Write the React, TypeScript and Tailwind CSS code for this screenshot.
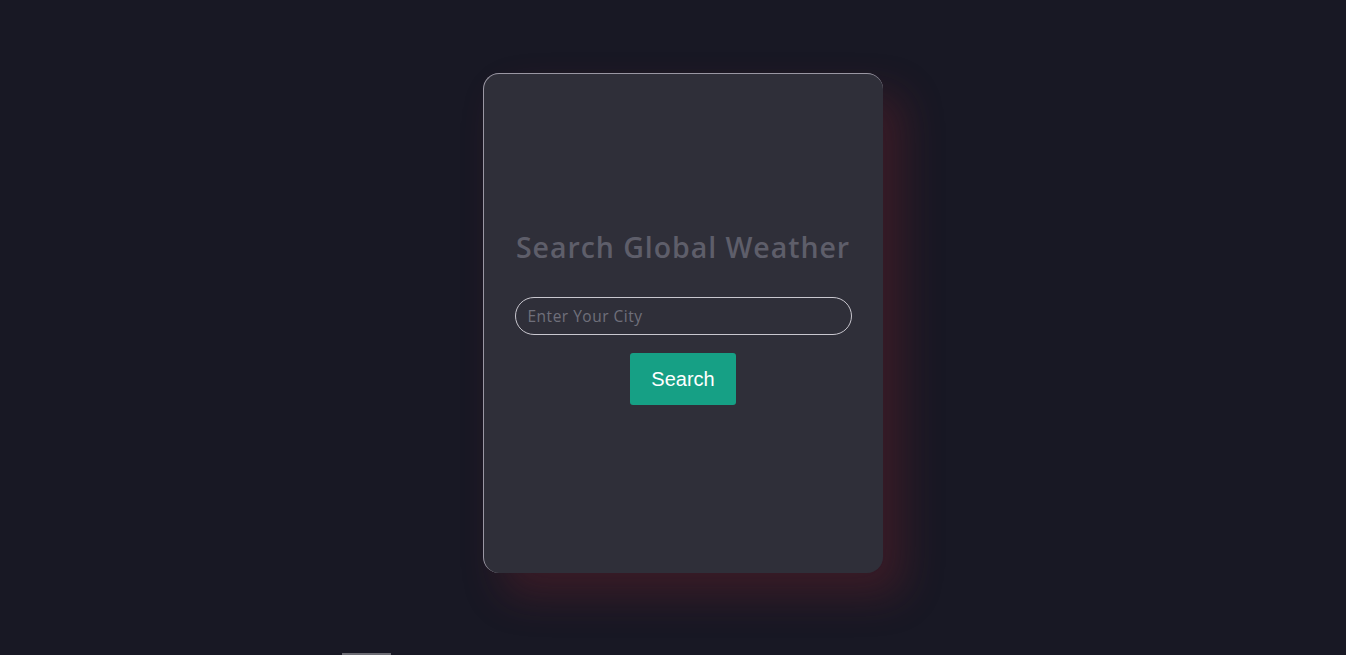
import React from "react";

export default function App() {
  return (
    <div className="min-h-screen bg-[#181824] overflow-hidden" style={{ fontFamily: "'Open Sans', 'Noto Sans', sans-serif" }}>
      <div className="h-[653px] flex justify-center pt-[73px]">
        <div className="w-[400px] h-[500px] bg-[#2f2f39] rounded-[16px] border-t border-l border-[#9a97a3] shadow-[20px_22px_40px_rgba(130,35,45,0.32)] flex flex-col items-center justify-center px-[31px] ml-[19px]">
          <h1 className="text-[28.5px] font-semibold text-[#5e5e6a] leading-none mt-[-9px] tracking-[0.95px]">
            Search Global Weather
          </h1>
          <input
            type="text"
            placeholder="Enter Your City"
            className="mt-[36px] w-full h-[38px] rounded-full border border-[#c9c7cf] bg-transparent px-[12px] text-[15.5px] tracking-[0.5px] text-[#c9c7cf] placeholder:text-[#6f6f7b] outline-none"
          />
          <button
            className="mt-[18px] w-[106px] h-[52px] rounded-[3px] bg-[#16a085] text-white text-[20px]"
            style={{ fontFamily: "'Liberation Sans', Arial, sans-serif" }}
          >
            Search
          </button>
        </div>
      </div>
      <div className="ml-[342px] w-[49px] h-[2px] bg-[#6b6b73]" />
    </div>
  );
}
